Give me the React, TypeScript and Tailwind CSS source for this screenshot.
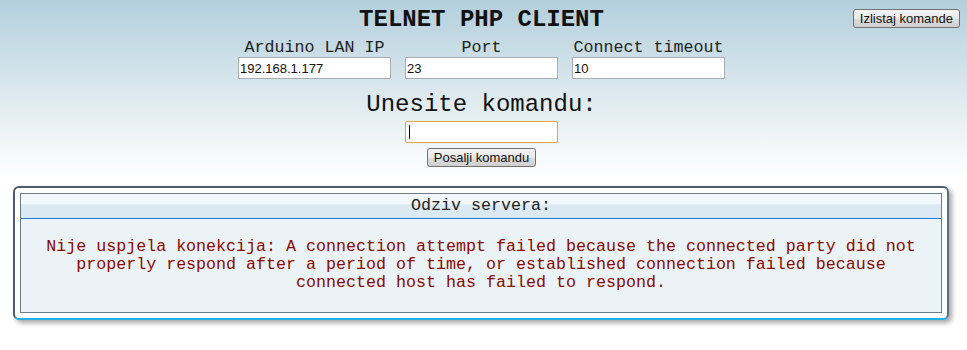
import React from 'react';

const mono = "font-['Liberation_Mono','Courier_New',monospace]";
const sans = "font-['Liberation_Sans',Arial,sans-serif]";

const fields = [
  { label: 'Arduino LAN IP', value: '192.168.1.177' },
  { label: 'Port', value: '23' },
  { label: 'Connect timeout', value: '10' },
];

const Btn: React.FC<{ children: React.ReactNode; className?: string }> = ({ children, className }) => (
  <button
    className={`h-[19px] px-[6px] rounded-[3px] border border-[#707070] bg-[linear-gradient(180deg,#f6f6f6_0%,#e8e8e8_50%,#dcdcdc_51%,#d0d0d0_100%)] text-[13px] leading-[15px] text-[#111] ${sans} ${className ?? ''}`}
  >
    {children}
  </button>
);

export default function App() {
  return (
    <div className="min-h-screen w-full bg-white bg-[linear-gradient(180deg,#b3cfdc_0px,#dbe8ee_90px,#ffffff_178px)] pb-[30px]">
      {/* header */}
      <div className="grid grid-cols-[1fr_auto_1fr] items-start">
        <div />
        <h1 className={`${mono} pt-[6px] pr-[4px] text-[24px] leading-[28px] font-bold text-[#111]`}>
          TELNET PHP CLIENT
        </h1>
        <div className="flex justify-end pt-[9px] pr-[7px]">
          <Btn>Izlistaj komande</Btn>
        </div>
      </div>

      {/* connection settings */}
      <div className="flex justify-center pr-[4px] mt-[5px]">
        <div className="grid grid-cols-[153px_153px_153px] gap-x-[14px]">
          {fields.map((f) => (
            <div key={f.label} className="flex flex-col items-center">
              <span className={`${mono} text-[16.67px] leading-[18px] text-[#222] whitespace-nowrap`}>{f.label}</span>
              <input
                readOnly
                value={f.value}
                className={`${sans} w-[153px] h-[22px] border border-[#a9adb2] bg-white px-[1px] text-[13px] text-[#111] outline-none`}
              />
            </div>
          ))}
        </div>
      </div>

      {/* command */}
      <div className="flex flex-col items-center pr-[4px] mt-[12px]">
        <span className={`${mono} text-[24px] leading-[28px] text-[#111]`}>Unesite komandu:</span>
        <div className="relative mt-[2px] w-[153px] h-[22px] rounded-[2px] border border-[#e0a848] bg-white shadow-[0_0_1px_#f0c878]">
          <input readOnly className="w-full h-full bg-transparent outline-none" />
          <span className="absolute left-[3px] top-[3px] h-[14px] w-[1px] bg-black" />
        </div>
        <Btn className="mt-[5px] pl-[6px] pr-[6px]">Posalji komandu</Btn>
      </div>

      {/* server response */}
      <div className="mt-[19px] ml-[13px] w-[936px] rounded-[6px] border-2 border-[#4f5d68] border-b-[#22b2e6] border-r-[#5a7080] bg-white p-[5px] shadow-[3px_3px_5px_rgba(0,0,0,0.35)]">
        <div className="border border-[#6b7b88] bg-[#ebf3f7]">
          <div className={`${mono} h-[25px] border-b border-[#1a7ed8] bg-[linear-gradient(180deg,#f1f7fa_0%,#f1f7fa_40%,#dae9f2_45%,#dae9f2_100%)] text-center text-[16.67px] leading-[24px] text-[#222]`}>
            Odziv servera:
          </div>
          <div className="flex justify-center pt-[19px] pb-[20px]">
            <p className={`${mono} w-[900px] text-center text-[16.67px] leading-[18px] text-[#8a0a00]`}>
              Nije uspjela konekcija: A connection attempt failed because the connected party did not properly respond after a period of time, or established connection failed because connected host has failed to respond.
            </p>
          </div>
        </div>
      </div>
    </div>
  );
}
